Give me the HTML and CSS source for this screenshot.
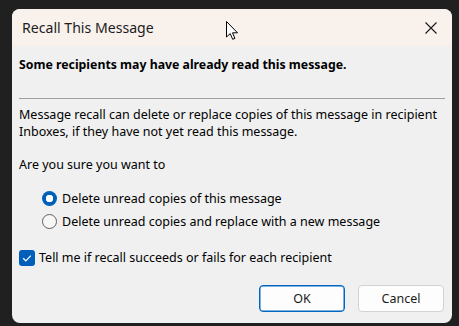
FILE: index.html
```html
<!DOCTYPE html>
<html>
<head>
<meta charset="utf-8">
<link rel="stylesheet" href="styles.css">
</head>
<body>
<div class="window">
  <div class="titlebar">
    <span class="title">Recall This Message</span>
    <svg class="close" width="12" height="12" viewBox="0 0 12 12"><path d="M0.5 0.5 L11.5 11.5 M11.5 0.5 L0.5 11.5" stroke="#1a1a1a" stroke-width="1.1" fill="none"/></svg>
  </div>
  <div class="content">
    <div class="warning">Some recipients may have already read this message.</div>
    <div class="sep"></div>
    <p class="para">Message recall can delete or replace copies of this message in recipient<br>Inboxes, if they have not yet read this message.</p>
    <p class="ask">Are you sure you want to</p>
    <div class="options">
      <div class="opt"><span class="radio on"></span><span>Delete unread copies of this message</span></div>
      <div class="opt"><span class="radio"></span><span>Delete unread copies and replace with a new message</span></div>
    </div>
    <div class="check-row">
      <span class="check"><svg width="16" height="16" viewBox="0 0 16 16"><path d="M4.2 8.3 L6.8 10.8 L11.8 5.6" stroke="#fff" stroke-width="1.2" fill="none"/></svg></span>
      <span>Tell me if recall succeeds or fails for each recipient</span>
    </div>
    <div class="buttons">
      <button class="btn primary">OK</button>
      <button class="btn">Cancel</button>
    </div>
  </div>
</div>
<svg class="cursor" width="13" height="20" viewBox="0 0 13 20"><path d="M0.5 0.5 L0.5 16 L4.2 12.6 L6.7 18.3 L8.9 17.4 L6.5 11.8 L11.5 11.8 Z" fill="#fff" stroke="#000" stroke-width="1" stroke-linejoin="miter"/></svg>
</body>
</html>
```
FILE: styles.css
```css
html, body {
  margin: 0;
  padding: 0;
  background: #202020;
  width: 459px;
  height: 326px;
  overflow: hidden;
  font-family: "Noto Sans", "Open Sans", sans-serif;
  color: #000;
}
body { position: relative; }
.window {
  margin: 9px 0 0 12px;
  width: 440px;
  height: 314px;
  border-radius: 8px;
  background: #f0f0f0;
  overflow: hidden;
  display: flex;
  flex-direction: column;
}
.titlebar {
  height: 37px;
  background: #f9f1ec;
  display: flex;
  align-items: center;
  justify-content: space-between;
  padding: 0 15px 0 10px;
  flex: none;
}
.title {
  font-size: 14.1px;
  color: #1c1c1c;
}
.close { margin-top: 1px; }
.content {
  padding: 0 7px 0 7px;
  font-size: 12.5px;
  display: flex;
  flex-direction: column;
}
.warning {
  font-weight: bold;
  font-size: 12.3px;
  margin-top: 10px;
  height: 17px;
  line-height: 17px;
}
.sep {
  height: 1px;
  background: #a0a0a0;
  margin-top: 25px;
}
.para {
  margin: 7px 0 0 0;
  line-height: 17px;
}
.ask {
  margin: 16px 0 0 0;
  line-height: 17px;
}
.options {
  margin-top: 17px;
  padding-left: 23px;
  display: flex;
  flex-direction: column;
  gap: 6px;
}
.opt, .check-row {
  display: flex;
  align-items: center;
  gap: 5px;
  line-height: 17px;
}
.radio {
  width: 13px;
  height: 13px;
  border-radius: 50%;
  border: 1px solid #5f5f5f;
  background: #f7f7f7;
  box-sizing: content-box;
  flex: none;
}
.radio.on {
  width: 15px;
  height: 15px;
  border: none;
  background: radial-gradient(circle, #fff 0 3.5px, #005fb8 4px);
}
.check-row { margin-top: 19px; gap: 4px; }
.check {
  width: 16px;
  height: 16px;
  border-radius: 3px;
  background: #005fb8;
  display: block;
  flex: none;
}
.check svg { display: block; }
.buttons {
  margin-top: 19px;
  display: flex;
  justify-content: flex-end;
  gap: 13px;
  padding-right: 1px;
}
.btn {
  width: 86px;
  height: 27px;
  border-radius: 4px;
  border: 1px solid #d2d2d2;
  background: #fdfdfd;
  font-family: "Noto Sans", "Open Sans", sans-serif;
  font-size: 12.5px;
  color: #1a1a1a;
  padding: 0;
}
.btn.primary {
  border: 1px solid #0067c0;
  box-shadow: inset 0 0 0 0.5px #0067c0;
}
.cursor {
  position: absolute;
  left: 226px;
  top: 21px;
}
```
